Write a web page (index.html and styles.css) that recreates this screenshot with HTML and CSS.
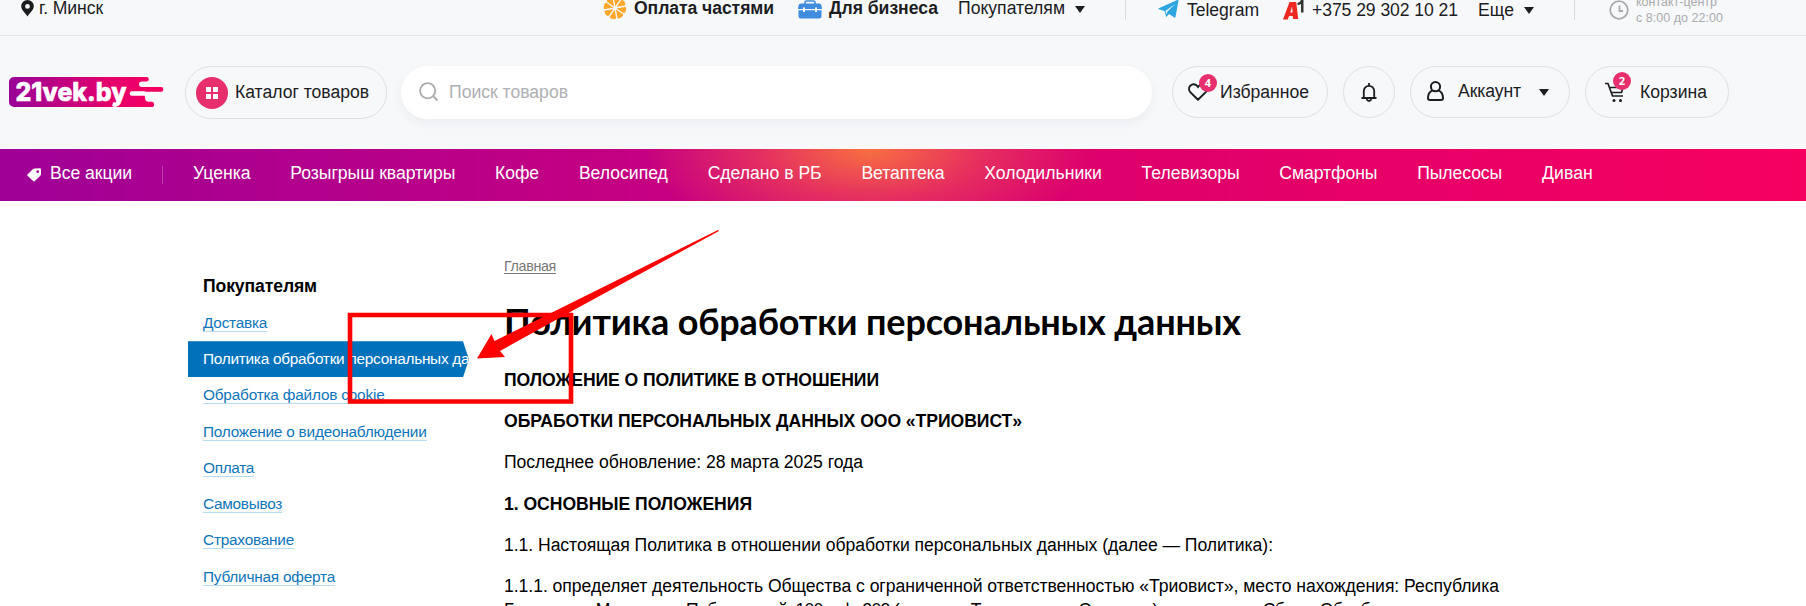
FILE: index.html
```html
<!DOCTYPE html>
<html lang="ru">
<head>
<meta charset="utf-8">
<title>Политика обработки персональных данных</title>
<link rel="stylesheet" href="styles.css">
</head>
<body>
<div class="page">
<header class="topbar">
  <div class="city"><svg width="13" height="17" viewBox="0 0 13 17"><path fill="#1c1d1f" fill-rule="evenodd" d="M6.500 0A6.300 6.300 0 0 0 .2 6.300C.2 10 4 12.500 6.500 16.500 9 12.500 12.800 10 12.800 6.300A6.300 6.300 0 0 0 6.500 0zm0 4a2.400 2.400 0 1 1 0 4.800 2.400 2.400 0 0 1 0-4.800z"/></svg><span class="fit" data-w="64">г. Минск</span></div>
  <div class="topnav">
    <svg class="i-orange" width="24" height="24" viewBox="-12 -12 24 24"><g fill="#ffa82d" transform="rotate(12)"><path id="seg" d="M0-.8-3.700-8.500Q-3.800-11.300 0-11.300T3.700-8.500z"/><use href="#seg" transform="rotate(45)"/><use href="#seg" transform="rotate(90)"/><use href="#seg" transform="rotate(135)"/><use href="#seg" transform="rotate(180)"/><use href="#seg" transform="rotate(225)"/><use href="#seg" transform="rotate(270)"/><use href="#seg" transform="rotate(315)"/></g><path d="M0-11V11M-11 0H11M-7.800-7.800 7.800 7.800M-7.800 7.800 7.800-7.800" transform="rotate(34.500)" stroke="#f7f8fa" stroke-width="1.300"/></svg>
    <b class="fit t-pay" data-w="140">Оплата частями</b>
    <svg class="i-case" width="24" height="19" viewBox="0 0 24 19"><path d="M7 4V2.500Q7 1 8.500 1h7Q17 1 17 2.500V4" fill="none" stroke="#3f8cde" stroke-width="1.600"/><path fill="#3f8cde" d="M3 3.500h18q2 0 2.500 2L24 9h-5V7.500h-2V9H7V7.500H5V9H0l.5-3.500Q1 3.500 3 3.500zM.5 10.200H5V12h2v-1.800h10V12h2v-1.800h4.500V16q0 2.500-2.500 2.500H3Q.5 18.500.5 16z"/></svg>
    <b class="fit t-biz" data-w="109">Для бизнеса</b>
    <span class="fit t-buy" data-w="107">Покупателям</span>
    <i class="caret"></i>
  </div>
  <div class="contacts">
    <svg width="21" height="18" viewBox="0 0 21 18"><path fill="#2ca5e0" d="M20.500.5 17.500 17q-.4 1-1.300.5l-5-3.600-2.400 2.700q-.6.500-.8-.4L6.500 11 .8 9.200q-1-.5 0-1L19.300.1q1.300-.4 1.200.4z"/><path fill="#f7f8fa" d="M7.500 11 17 4 9.300 11.800 8.700 14.500z"/></svg>
    <span class="fit t-tg" data-w="72">Telegram</span>
    <svg class="i-a1" width="22" height="20" viewBox="0 0 22 20"><path fill="#ee2722" fill-rule="evenodd" d="M6.500 2h6.700l2 17H10l-.2-3H6l-1.200 3.500H0zM9 6.500 7.300 12.500h2.300z"/><path fill="#333" d="M18 0h2.500v12.500H18V4q-1.500 1-3.500 1V3Q17 2.500 18 0z"/></svg>
    <span class="fit t-phone" data-w="146">+375 29 302 10 21</span>
    <span class="fit t-more" data-w="36">Еще</span>
    <i class="caret"></i>
  </div>
  <div class="hours">
    <svg width="20" height="20" viewBox="0 0 20 20" fill="none" stroke="#a9abae" stroke-width="1.800"><circle cx="10" cy="10" r="8.800"/><path d="M10.500 5.500V11H14"/></svg>
    <div><div class="fit" data-w="81">контакт-центр</div><div class="fit" data-w="87">с 8:00 до 22:00</div></div>
  </div>
</header>

<section class="header">
  <a class="logo"><svg width="156" height="32" viewBox="0 0 156 32"><defs><linearGradient id="lg"><stop offset="0" stop-color="#980098"/><stop offset=".65" stop-color="#e4006c"/><stop offset="1" stop-color="#f60060"/></linearGradient></defs><path fill="url(#lg)" d="M6 1h132.500a2.300 2.300 0 0 1 0 4.600H134q-3 0-3 2.700t3 2.700h19a2.400 2.400 0 0 1 0 4.800h-21q-1.500 0-1.500 1.500t1.500 1.500h3q2 0 2 3t3 4h3.500a2.600 2.600 0 0 1 0 5.200H6a5 5 0 0 1-5-5V6a5 5 0 0 1 5-5z"/><path d="M124 17.500h12" stroke="#fff" stroke-width="4.600" stroke-linecap="round"/><text x="7.500" y="25" textLength="111" lengthAdjust="spacingAndGlyphs" class="logo-text">21vek.by</text></svg></a>
  <a class="pill catalog"><span class="dot"><i></i><i></i><i></i><i></i></span><span class="fit" data-w="134">Каталог товаров</span></a>
  <div class="search"><svg width="20" height="20" viewBox="0 0 20 20" fill="none" stroke="#a9abae" stroke-width="1.800"><circle cx="8.700" cy="8.700" r="7.600"/><path d="m14 14 4.500 4.500"/></svg><span class="fit" data-w="119">Поиск товаров</span></div>
  <a class="pill fav"><svg width="20" height="18" viewBox="0 0 20 18" fill="none" stroke="#1c1d1f" stroke-width="2"><path d="M10 16.700 2.500 9.400C.5 7.200.7 4.300 2.500 2.600c2-2 5.200-1.700 6.700.4l.8 1 .8-1c1.500-2.100 4.700-2.400 6.700-.4 1.800 1.700 2 4.600 0 6.800z"/></svg><em class="badge">4</em><span class="fit" data-w="89">Избранное</span></a>
  <a class="pill bell"><svg width="16" height="19" viewBox="0 0 16 19" fill="none" stroke="#1c1d1f" stroke-width="1.800"><path d="M.5 15h15M2.800 15V8a5.200 5.200 0 0 1 10.400 0v7M8 2.500V0M5.700 16q.5 2 2.300 2t2.300-2"/></svg></a>
  <a class="pill account"><svg width="17" height="20" viewBox="0 0 17 20" fill="none" stroke="#1c1d1f" stroke-width="2"><circle cx="8.500" cy="5.700" r="4.600"/><path d="M5.500 9.300C2.500 10.700 1 13.300 1 17q0 2 2 2h11q2 0 2-2c0-3.700-1.500-6.300-4.500-7.700"/></svg><span class="fit" data-w="63">Аккаунт</span><i class="caret"></i></a>
  <a class="pill cart"><svg width="20" height="21" viewBox="0 0 20 21" fill="none" stroke="#1c1d1f" stroke-width="1.700"><path d="M0 1.500h3L7.500 14H18M4.500 5.500H18L16.500 10.500H6.500"/><g fill="#1c1d1f" stroke="none"><circle cx="9" cy="18.500" r="1.500"/><circle cx="15.500" cy="18.500" r="1.500"/></g></svg><em class="badge">2</em><span class="fit" data-w="67">Корзина</span></a>
</section>

<nav class="promo">
  <svg width="15" height="14" viewBox="0 0 15 14"><path fill="#fff" fill-rule="evenodd" d="M.5 6.500 6 1q.7-.6 1.600-.6l5.400-.2q1 0 1 1V6q0 1-.7 1.700L7.600 13.200q-.6.600-1.200 0L.5 7.700q-.6-.6 0-1.200zM10.700 2.300a1.400 1.400 0 1 0 0 2.800 1.400 1.400 0 0 0 0-2.800z"/></svg>
  <span class="fit all" data-w="82">Все акции</span><i class="sep"></i>
  <span class="fit" data-w="57.500">Уценка</span><span class="fit" data-w="165">Розыгрыш квартиры</span><span class="fit" data-w="44">Кофе</span><span class="fit" data-w="89">Велосипед</span><span class="fit" data-w="114">Сделано в РБ</span><span class="fit" data-w="83">Ветаптека</span><span class="fit" data-w="117.500">Холодильники</span><span class="fit" data-w="98">Телевизоры</span><span class="fit" data-w="98">Смартфоны</span><span class="fit" data-w="85">Пылесосы</span><span class="fit" data-w="51">Диван</span>
</nav>

<main class="main">
  <aside class="side">
    <h2><span class="fit" data-w="114">Покупателям</span></h2>
    <ul>
      <li><a class="fit" data-w="64">Доставка</a></li>
      <li class="active"><span class="fit" data-w="301">Политика обработки персональных данных</span></li>
      <li><a class="fit" data-w="181.500">Обработка файлов cookie</a></li>
      <li><a class="fit" data-w="223.500">Положение о видеонаблюдении</a></li>
      <li><a class="fit" data-w="51">Оплата</a></li>
      <li><a class="fit" data-w="79">Самовывоз</a></li>
      <li><a class="fit" data-w="91">Страхование</a></li>
      <li><a class="fit" data-w="132">Публичная оферта</a></li>
    </ul>
  </aside>
  <article class="content">
    <a class="crumb"><span class="fit" data-w="52">Главная</span></a>
    <h1><span class="fit" data-w="737">Политика обработки персональных данных</span></h1>
    <p><b class="fit" data-w="375">ПОЛОЖЕНИЕ О ПОЛИТИКЕ В ОТНОШЕНИИ</b></p>
    <p><b class="fit" data-w="518">ОБРАБОТКИ ПЕРСОНАЛЬНЫХ ДАННЫХ ООО «ТРИОВИСТ»</b></p>
    <p><span class="fit" data-w="359">Последнее обновление: 28 марта 2025 года</span></p>
    <p><b class="fit" data-w="248">1. ОСНОВНЫЕ ПОЛОЖЕНИЯ</b></p>
    <p><span class="fit" data-w="769">1.1. Настоящая Политика в отношении обработки персональных данных (далее — Политика):</span></p>
    <p><span class="fit" data-w="995">1.1.1. определяет деятельность Общества с ограниченной ответственностью «Триовист», место нахождения: Республика</span><br><span class="fit" data-w="898">Беларусь, г. Минск, пр-т Победителей, 100, оф. 203 (далее — Триовист, мы, Оператор) в отношении Сбора, Обработки</span></p>
  </article>
</main>
<svg class="annotation" width="1806" height="606" viewBox="0 0 1806 606"><path d="M350 315h221v86.500H350z" fill="none" stroke="#f00" stroke-width="4.600"/><path fill="#f00" d="M718 230 719 231 572 311 500 351 505 357 477 358.500 491.500 334 494.500 341 553 312z"/></svg>
</div>
<script src="fit.js"></script>
</body>
</html>
```
FILE: fit.js
```js
// Tracks each label so that its line takes the width given in data-w.
document.querySelectorAll('.fit').forEach(function (el) {
  var range = document.createRange();
  range.selectNodeContents(el);
  var natural = range.getBoundingClientRect().width;
  var target = parseFloat(el.dataset.w);
  el.style.letterSpacing = ((target - natural) / el.textContent.length).toFixed(3) + 'px';
});
```
FILE: styles.css
```css
* { box-sizing: border-box; }
body { margin: 0; font: 16px/20px "Liberation Sans", Arial, sans-serif; color: #1c1d1f; background: #fff; }
.page { position: relative; width: 1806px; height: 606px; overflow: hidden; }
.fit { white-space: nowrap; }
svg { flex: none; display: block; }
.caret { width: 0; height: 0; border: 5px solid transparent; border-top: 7px solid #1c1d1f; border-bottom: 0; }

.topbar { display: flex; height: 36px; background: #f7f8fa; border-bottom: 1px solid #e1e3e5; font-size: 17.600px; align-items: flex-start; padding-left: 21px; }
.city { display: flex; gap: 5px; width: 582px; line-height: 17px; }
.topnav { display: flex; width: 523px; height: 20px; border-right: 1px solid #d9dbde; line-height: 17px; }
.topnav .i-orange { margin-top: -4px; }
.t-pay { margin-left: 7px; width: 140px; }
.i-case { margin-left: 24px; margin-top: 0; }
.t-biz { margin-left: 7px; width: 109px; }
.t-buy { margin-left: 20px; width: 109px; }
.topnav .caret { margin: 6px 0 0 8px; }
.contacts { display: flex; width: 449px; height: 20px; padding-left: 32px; border-right: 1px solid #d9dbde; }
.contacts .caret { margin: 7px 0 0 10px; }
.t-tg { margin-left: 8px; width: 72px; }
.i-a1 { margin-left: 24px; }
.t-phone { margin-left: 7px; width: 146px; }
.t-more { margin-left: 20px; width: 36px; }
.hours { display: flex; gap: 7px; padding-left: 34px; color: #a9abae; font-size: 12.500px; line-height: 16px; }
.hours > div { margin-top: -6px; }

.header { display: flex; height: 113px; background: #f7f8fa; padding: 30px 0 0 8px; font-size: 17.600px; }
.logo { margin-top: 10px; width: 177px; }
.logo-text { font: 800 26px Inter, sans-serif; fill: #fff; stroke: #fff; stroke-width: .6px; }
.pill { position: relative; display: flex; align-items: center; height: 52px; border: 1px solid #dddfe2; border-radius: 26px; }
.header .pill.catalog { width: 202px; height: 53px; padding-left: 10px; gap: 7px; }
.catalog .fit { margin-top: -1px; }
.dot { width: 32px; height: 32px; border-radius: 50%; background: #e72f6d; display: grid; grid-template: 5px 5px / 5px 5px; gap: 2px; place-content: center; }
.dot i { background: #fff; }
.search { display: flex; align-items: center; gap: 10px; width: 751px; height: 53px; margin: 0 20px 0 14px; border-radius: 27px; padding-left: 18px; padding-bottom: 2px; background: #fff; box-shadow: 0 4px 10px rgba(40, 50, 70, .06); color: #aeb0b3; font-size: 17.600px; }
.fav { width: 156px; padding-left: 15px; gap: 12px; margin-right: 15px; }
.bell { width: 52px; justify-content: center; margin-right: 15px; }
.account { width: 160px; padding-left: 16px; gap: 14px; margin-right: 15px; }
.account svg { margin-top: -3px; }
.account .fit { width: 64px; margin-top: -2px; }
.account .caret { margin-left: 3px; }
.cart { width: 144px; padding-left: 19px; gap: 15px; }
.badge { position: absolute; left: 26px; top: 7px; width: 18px; height: 18px; border-radius: 50%; background: #e72f6d; color: #fff; font: bold 11px/18px "Open Sans", sans-serif; text-align: center; }
.cart .badge { left: 27px; top: 5px; }

.promo { display: flex; height: 52px; padding: 14px 0 0 27px; color: #fff; font-size: 17.600px; background: radial-gradient(ellipse 225px 100px at 870px 0, #f87040 0, rgba(236, 64, 87, .75) 48%, rgba(222, 0, 108, 0) 100%), linear-gradient(90deg, #9f0096 0, #c80080 38%, #de006c 62%, #f60060 100%); }
.promo svg { margin: 5px 8px 0 0; }
.promo .fit { margin-right: 39.800px; }
.promo .all { margin-right: 30px; }
.sep { width: 1px; height: 18px; margin: 3px 30px 0 0; background: rgba(255,255,255,.25); }

.main { display: flex; padding-left: 188px; }
.side { width: 316px; padding-top: 74px; }
.side h2 { margin: 0 0 18px 15px; font-size: 17.600px; line-height: 22px; color: #000; }
.side ul { margin: 0; padding: 0; list-style: none; width: 281px; }
.side li { height: 36.300px; padding-left: 15px; font-size: 15.400px; line-height: 16px; color: #0f75ba; }
.side li a { border-bottom: 1px solid #b9dbef; }
.side li.active { height: 36px; margin: -10px 0 10px; line-height: 36px; background: #0072bc; color: #fff; overflow: hidden; white-space: nowrap; clip-path: polygon(0 0, 275px 0, 281px 50%, 275px 100%, 0 100%); }
.content { padding-top: 55px; color: #000; font-size: 17.600px; }
.crumb { display: block; font-size: 14.300px; color: #777; text-decoration: underline; text-underline-offset: 2px; }
h1 { margin: 24px 0 26px; font: bold 36px/42px Lato, "Open Sans", sans-serif; }
.content p { margin: 0 0 17.200px; line-height: 24px; }
.annotation { position: absolute; left: 0; top: 0; }
```
